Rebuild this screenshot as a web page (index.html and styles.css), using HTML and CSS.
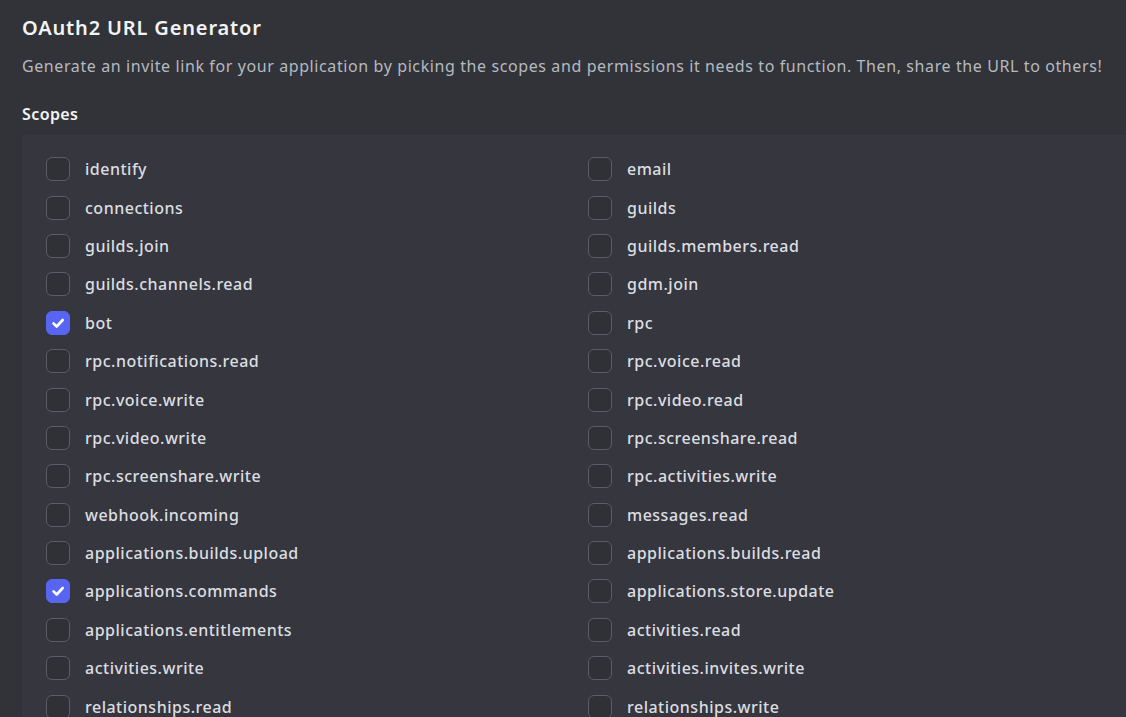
FILE: index.html
```html
<!DOCTYPE html>
<html>
<head>
<meta charset="utf-8">
<link rel="stylesheet" href="styles.css">
</head>
<body>
<div class="page">
  <h1 class="title">OAuth2 URL Generator</h1>
  <p class="desc">Generate an invite link for your application by picking the scopes and permissions it needs to function. Then, share the URL to others!</p>
  <h2 class="section">Scopes</h2>
  <div class="panel">
    <div class="grid">
      <label class="item"><span class="box"></span><span class="lbl">identify</span></label>
      <label class="item"><span class="box"></span><span class="lbl">email</span></label>
      <label class="item"><span class="box"></span><span class="lbl">connections</span></label>
      <label class="item"><span class="box"></span><span class="lbl">guilds</span></label>
      <label class="item"><span class="box"></span><span class="lbl">guilds.join</span></label>
      <label class="item"><span class="box"></span><span class="lbl">guilds.members.read</span></label>
      <label class="item"><span class="box"></span><span class="lbl">guilds.channels.read</span></label>
      <label class="item"><span class="box"></span><span class="lbl">gdm.join</span></label>
      <label class="item"><span class="box checked"><svg viewBox="0 0 24 24" width="24" height="24"><path d="M7.5 12.3l3.2 3.2 6-6.5" fill="none" stroke="#fff" stroke-width="2.6" stroke-linecap="round" stroke-linejoin="round"/></svg></span><span class="lbl">bot</span></label>
      <label class="item"><span class="box"></span><span class="lbl">rpc</span></label>
      <label class="item"><span class="box"></span><span class="lbl">rpc.notifications.read</span></label>
      <label class="item"><span class="box"></span><span class="lbl">rpc.voice.read</span></label>
      <label class="item"><span class="box"></span><span class="lbl">rpc.voice.write</span></label>
      <label class="item"><span class="box"></span><span class="lbl">rpc.video.read</span></label>
      <label class="item"><span class="box"></span><span class="lbl">rpc.video.write</span></label>
      <label class="item"><span class="box"></span><span class="lbl">rpc.screenshare.read</span></label>
      <label class="item"><span class="box"></span><span class="lbl">rpc.screenshare.write</span></label>
      <label class="item"><span class="box"></span><span class="lbl">rpc.activities.write</span></label>
      <label class="item"><span class="box"></span><span class="lbl">webhook.incoming</span></label>
      <label class="item"><span class="box"></span><span class="lbl">messages.read</span></label>
      <label class="item"><span class="box"></span><span class="lbl">applications.builds.upload</span></label>
      <label class="item"><span class="box"></span><span class="lbl">applications.builds.read</span></label>
      <label class="item"><span class="box checked"><svg viewBox="0 0 24 24" width="24" height="24"><path d="M7.5 12.3l3.2 3.2 6-6.5" fill="none" stroke="#fff" stroke-width="2.6" stroke-linecap="round" stroke-linejoin="round"/></svg></span><span class="lbl">applications.commands</span></label>
      <label class="item"><span class="box"></span><span class="lbl">applications.store.update</span></label>
      <label class="item"><span class="box"></span><span class="lbl">applications.entitlements</span></label>
      <label class="item"><span class="box"></span><span class="lbl">activities.read</span></label>
      <label class="item"><span class="box"></span><span class="lbl">activities.write</span></label>
      <label class="item"><span class="box"></span><span class="lbl">activities.invites.write</span></label>
      <label class="item"><span class="box"></span><span class="lbl">relationships.read</span></label>
      <label class="item"><span class="box"></span><span class="lbl">relationships.write</span></label>
    </div>
  </div>
</div>
</body>
</html>
```

FILE: styles.css
```css
html, body {
  margin: 0;
  padding: 0;
  background: #313338;
  overflow: hidden;
  height: 717px;
}
body {
  font-family: "Noto Sans", "Open Sans", sans-serif;
  color: #dbdee1;
}
.page {
  padding: 16px 0 0 22px;
}
.title {
  margin: 0;
  font-size: 20px;
  line-height: 24px;
  font-weight: 600;
  letter-spacing: 0.85px;
  color: #f2f3f5;
}
.desc {
  margin: 16px 0 0;
  font-size: 16px;
  line-height: 20px;
  letter-spacing: 0.6px;
  white-space: nowrap;
  color: #b5bac1;
}
.section {
  margin: 28px 0 0;
  font-size: 16px;
  line-height: 20px;
  font-weight: 600;
  letter-spacing: 0.4px;
  color: #f2f3f5;
}
.panel {
  margin-top: 11px;
  box-sizing: border-box;
  background: #36363e;
  padding: 15px 0 0 24px;
  border-radius: 4px 0 0 0;
}
.grid {
  display: grid;
  grid-template-columns: 542px 1fr;
  grid-auto-rows: 38.4px;
}
.item {
  display: flex;
  align-items: center;
  gap: 15px;
}
.box {
  width: 24px;
  height: 24px;
  box-sizing: border-box;
  border: 1px solid #5b5d64;
  border-radius: 6px;
  background: #303137;
  flex: none;
  display: flex;
}
.box.checked {
  background: #5865f2;
  border-color: #5865f2;
}
.box svg {
  margin: -1px;
}
.lbl {
  font-size: 16px;
  line-height: 20px;
  letter-spacing: 0.5px;
  color: #dbdee1;
  font-weight: 500;
}
```
